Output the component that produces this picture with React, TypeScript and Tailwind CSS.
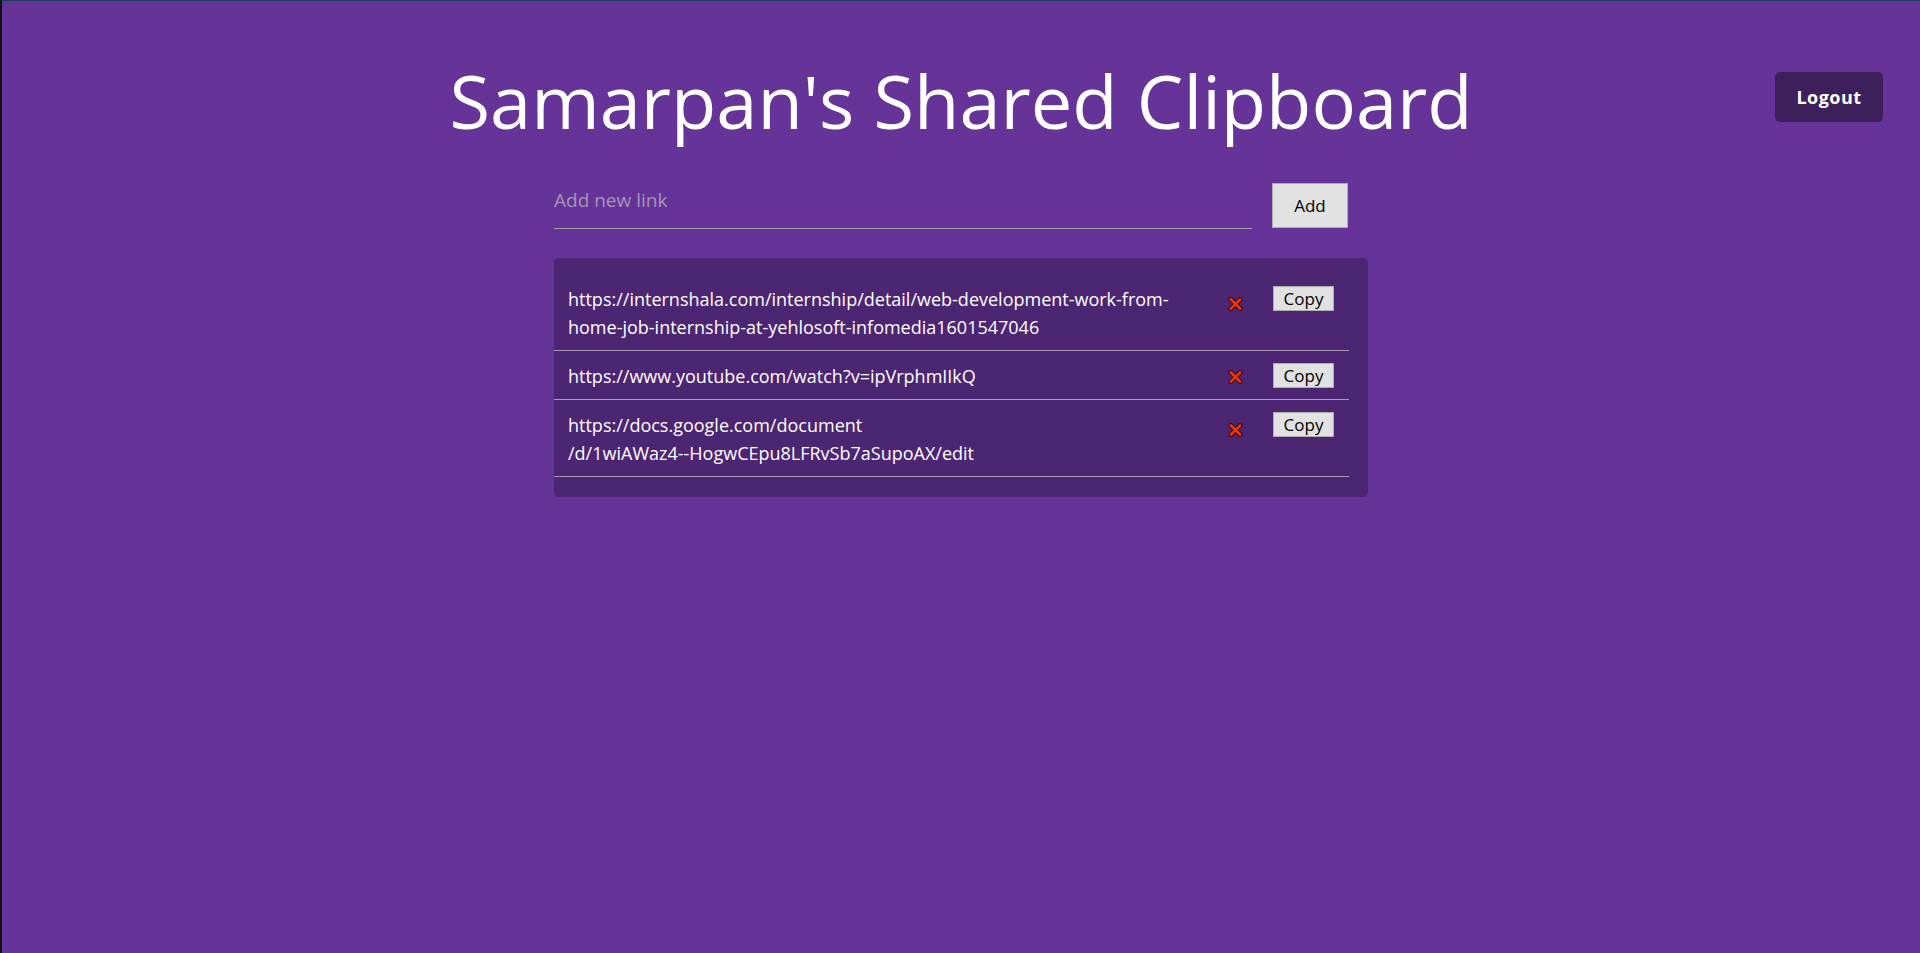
import React from 'react'

const links = [
  ['https://internshala.com/internship/detail/web-development-work-from-', 'home-job-internship-at-yehlosoft-infomedia1601547046'],
  ['https://www.youtube.com/watch?v=ipVrphmIIkQ'],
  ['https://docs.google.com/document', '/d/1wiAWaz4--HogwCEpu8LFRvSb7aSupoAX/edit'],
]

function Cross() {
  return (
    <svg width="15" height="14" viewBox="0 0 15 14">
      <path d="M3 2.5 L12 11.5 M12 2.5 L3 11.5" stroke="#3a0d08" strokeWidth="4.6" strokeLinecap="square" />
      <path d="M3 2.5 L12 11.5 M12 2.5 L3 11.5" stroke="#f0330f" strokeWidth="2.6" strokeLinecap="square" />
    </svg>
  )
}

export default function App() {
  return (
    <div className="min-h-[953px] bg-[#663399] border-l-2 border-t border-l-[#111] border-t-[#1e3a5f] font-['Open_Sans',sans-serif]">
      <header className="relative">
        <h1 className="pt-[50px] text-center text-[74px] leading-[100px] text-white">Samarpan's Shared Clipboard</h1>
        <button className="absolute right-[37px] top-[71px] h-[50px] w-[108px] rounded-[5px] bg-[#3d1f5c] text-[18px] font-bold tracking-wide text-white">
          Logout
        </button>
      </header>

      <main className="mx-auto mt-[32px] w-[814px]">
        <div className="flex items-end gap-[20px]">
          <div className="w-[698px] border-b border-[#a3a3a3] pb-[14px]">
            <input
              placeholder="Add new link"
              className="w-full bg-transparent text-[19px] text-white outline-none placeholder:text-[#a396b4]"
            />
          </div>
          <button className="mb-[1px] h-[45px] w-[76px] border border-[#adadad] bg-[#e1e1e1] text-[17px] text-black">Add</button>
        </div>

        <ul className="mt-[29px] rounded-[5px] bg-[#4c2673] pt-[16px] pb-[20px] pr-[19px]">
          {links.map((l, i) => (
            <li key={i} className="flex items-start border-b border-[#a89bb8] pl-[14px] pr-[15px] pt-[11px] pb-[9px]">
              <div className="flex-1 text-[18px] leading-[28px] text-white">
                {l.map((line, j) => (
                  <div key={j}>{line}</div>
                ))}
              </div>
              <span className={i === 1 ? 'mt-[8px]' : 'mt-[12px]'}>
                <Cross />
              </span>
              <button className="ml-[30px] mt-[1px] h-[25px] w-[61px] border border-[#adadad] bg-[#e1e1e1] text-[17px] leading-none text-black">
                Copy
              </button>
            </li>
          ))}
        </ul>
      </main>
    </div>
  )
}
